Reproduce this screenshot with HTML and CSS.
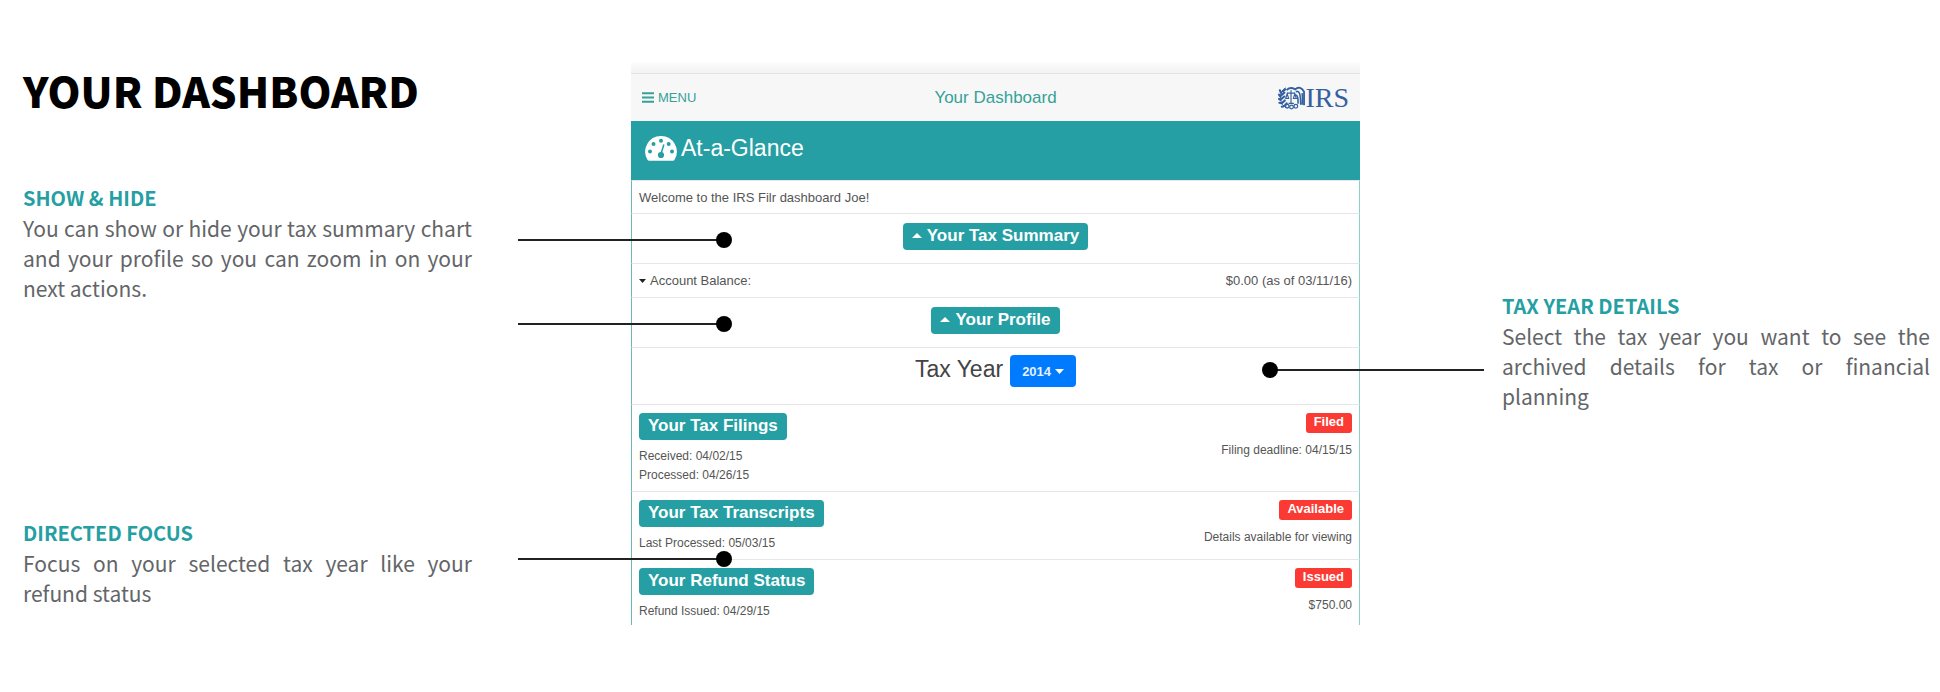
FILE: index.html
```html
<!DOCTYPE html>
<html lang="en">
<head>
<meta charset="utf-8">
<meta name="viewport" content="width=device-width, initial-scale=1">
<title>Your Dashboard</title>
<link rel="stylesheet" href="styles.css">
</head>
<body>
<main class="page">
  <div class="notes">
    <h1 class="title">YOUR DASHBOARD</h1>
    <section class="note">
      <h2>SHOW &amp; HIDE</h2>
      <p>You can show or hide your tax summary chart and your profile so you can zoom in on your next actions.</p>
    </section>
    <section class="note note-focus">
      <h2>DIRECTED FOCUS</h2>
      <p>Focus on your selected tax year like your refund status</p>
    </section>
  </div>

  <section class="app">
    <div class="shade"></div>
    <header class="navbar">
      <button class="menu" type="button">
        <svg width="12" height="11" viewBox="0 0 12 11" aria-hidden="true"><path d="M0 1.2h12M0 5.5h12M0 9.8h12" stroke="currentColor" stroke-width="2"/></svg>
        MENU
      </button>
      <span class="nav-title">Your Dashboard</span>
      <a class="logo" href="#">
        <svg width="27" height="24" viewBox="0 0 28 24" fill="none" stroke="currentColor" aria-hidden="true">
          <path d="M8 1.500C3 4 2 9 3 14.500S7 21 10 22" stroke-width="1"/>
          <path d="M3 6.500 2 4M2.500 10.500 1 8.500M2.500 14 1 13M3.500 17.500 1.500 17M6 20.500 4 21M5 5l2.500-2M3.500 9l3-2.500M3.500 13l3-2.500M4.500 17 7 14.500M7 20l2-2.500" stroke-width="2.200" stroke-linecap="round"/>
          <path d="M13.500 4v13M9.500 7h8M9.500 7.500l-1.500 5h3zM17.500 7.500l-1.500 5h3zM11 17.500h5.500" stroke-width="1.200"/>
          <path d="M9 4C11 .8 15 1.500 18 3c3-3 7-1.500 9 2.500v14" stroke-width="1.900"/>
          <path d="M18.500 5.500c4-2 5 4 5 13.500M18 9c2.500-.5 3 4 2.800 9M25 7c.5 3 .5 8 .2 12" stroke-width="1.600"/>
          <circle cx="9.500" cy="20.500" r="1.900" stroke-width="1.300"/><circle cx="14" cy="21.300" r="1.900" stroke-width="1.300"/><circle cx="18.500" cy="20.500" r="1.900" stroke-width="1.300"/>
        </svg>
        <span>IRS</span>
      </a>
    </header>
    <div class="glance">
      <svg width="32" height="25" viewBox="0 0 32 25" aria-hidden="true">
        <path fill="#fff" d="M16 0A15.700 15.700 0 0 0 2.600 24q.5.800 1.400.8h24q.9 0 1.400-.8A15.700 15.700 0 0 0 16 0z"/>
        <g fill="#259fa3"><circle cx="5" cy="15.500" r="2"/><circle cx="8.500" cy="8" r="2"/><circle cx="16" cy="4.800" r="2"/><circle cx="23.700" cy="8" r="2"/><circle cx="27" cy="15.500" r="2"/><circle cx="16" cy="19" r="3.100"/></g>
        <path d="M16 18 18.700 9" stroke="#259fa3" stroke-width="1.500" stroke-linecap="round"/>
      </svg>
      <h2>At-a-Glance</h2>
    </div>

    <div class="row line-row"><span>Welcome to the IRS Filr dashboard Joe!</span></div>

    <div class="row toggle-row">
      <button class="badge" type="button">
        <svg width="10" height="5" viewBox="0 0 10 5" aria-hidden="true"><path fill="currentColor" d="M0 5 5 0l5 5z"/></svg>
        Your Tax Summary
      </button>
      <span class="pointer pointer-left"></span>
    </div>

    <div class="row line-row">
      <span class="balance">
        <svg width="7" height="4" viewBox="0 0 7 4" aria-hidden="true"><path fill="#222" d="M0 0h7L3.500 4z"/></svg>
        Account Balance:
      </span>
      <span>$0.00 (as of 03/11/16)</span>
    </div>

    <div class="row toggle-row">
      <button class="badge" type="button">
        <svg width="10" height="5" viewBox="0 0 10 5" aria-hidden="true"><path fill="currentColor" d="M0 5 5 0l5 5z"/></svg>
        Your Profile
      </button>
      <span class="pointer pointer-left"></span>
    </div>

    <div class="row year-row">
      <label for="year">Tax Year</label>
      <span class="year">
        <select id="year"><option>2014</option></select>
        <svg width="9" height="5" viewBox="0 0 9 5" aria-hidden="true"><path fill="#fff" d="M0 0h9L4.500 5z"/></svg>
      </span>
      <span class="pointer pointer-right"></span>
    </div>

    <div class="row item">
      <div class="item-main">
        <button class="badge" type="button">Your Tax Filings</button>
        <p>Received: 04/02/15<br>Processed: 04/26/15</p>
      </div>
      <div class="item-side"><span class="status">Filed</span><p>Filing deadline: 04/15/15</p></div>
    </div>

    <div class="row item">
      <div class="item-main">
        <button class="badge" type="button">Your Tax Transcripts</button>
        <p>Last Processed: 05/03/15</p>
      </div>
      <div class="item-side"><span class="status">Available</span><p>Details available for viewing</p></div>
    </div>

    <div class="row item item-last">
      <div class="item-main">
        <button class="badge" type="button">Your Refund Status</button>
        <p>Refund Issued: 04/29/15</p>
      </div>
      <div class="item-side"><span class="status">Issued</span><p>$750.00</p></div>
      <span class="pointer pointer-left pointer-edge"></span>
    </div>
  </section>

  <div class="notes notes-right">
    <section class="note">
      <h2>TAX YEAR DETAILS</h2>
      <p><span class="full-lines">Select the tax year you want to see the archived details for tax or financial</span> planning</p>
    </section>
  </div>
</main>
</body>
</html>
```
FILE: styles.css
```css
* { box-sizing: border-box; }

body {
  margin: 0;
  background: #fff;
  color: #555;
  font-family: "Liberation Sans", Arial, sans-serif;
}

h1, h2, p { margin: 0; }

button, select {
  margin: 0;
  border: 0;
  font-family: inherit;
}

svg { flex: none; }

.page {
  display: grid;
  grid-template-columns: 608fr 729fr 570fr;
  padding: 62px 10px 40px 23px;
  align-items: start;
}

/* Annotations */
.notes {
  padding-right: 159px;
  font-family: "Noto Sans CJK SC", "Open Sans", sans-serif;
}

.title {
  color: #000;
  font-size: 42px;
  font-weight: 900;
  line-height: 56px;
}

.note { margin-top: 65px; }
.note-focus { margin-top: 215px; }

.note h2 {
  color: #259fa3;
  font-size: 20px;
  font-weight: 700;
  line-height: 30px;
}

.note p {
  color: #636568;
  font-size: 21px;
  line-height: 30px;
  text-align: justify;
}

.full-lines { display: block; text-align-last: justify; }

.notes-right { padding: 164px 0 0 142px; }

/* Dashboard */
.shade {
  height: 12px;
  background: linear-gradient(#fcfcfc, #f3f3f3);
  border-bottom: 1px solid #e2e2e2;
}

.navbar {
  display: grid;
  grid-template-columns: 1fr auto 1fr;
  align-items: center;
  height: 47px;
  padding: 0 11px;
  background: #f7f7f7;
  color: #35a198;
}

.menu {
  display: flex;
  align-items: center;
  justify-self: start;
  gap: 4px;
  padding: 0;
  background: none;
  color: inherit;
  font-size: 13px;
}

.nav-title { font-size: 17px; }

.logo {
  display: flex;
  align-items: center;
  justify-self: end;
  color: #34609f;
  font: 28px/30px "Liberation Serif", serif;
  text-decoration: none;
}

.glance {
  display: flex;
  align-items: center;
  gap: 4px;
  height: 59px;
  padding: 0 14px 5px;
  background: #259fa3;
  color: #fff;
}

.glance h2 { font-size: 23px; font-weight: 400; }

.row {
  position: relative;
  display: flex;
  padding: 0 7px;
  border: 1px solid #e6e6e6;
  border-width: 1px 1px 0;
  border-right-color: #8fd0c4;
  border-left-color: #6fb8aa;
}

.line-row {
  align-items: center;
  justify-content: space-between;
  height: 34px;
  font-size: 13px;
}

.glance + .line-row { height: 33px; }

.balance { display: flex; align-items: center; gap: 4px; }

.toggle-row { height: 50px; padding-top: 9px; align-items: flex-start; justify-content: center; }

.badge {
  display: flex;
  align-items: center;
  gap: 5px;
  padding: 3px 9px 5px;
  border-radius: 4px;
  background: #259fa3;
  color: #fff;
  font-size: 17px;
  font-weight: 700;
  line-height: 19px;
}

.year-row {
  align-items: flex-start;
  justify-content: center;
  gap: 7px;
  height: 57px;
  padding-top: 7px;
  color: #444;
  font-size: 23px;
  line-height: 28px;
}

.year { display: grid; align-items: center; }

.year select {
  grid-area: 1 / 1;
  appearance: none;
  width: 66px;
  height: 32px;
  padding: 0 0 0 12px;
  border-radius: 4px;
  background: #007bff;
  color: #e4f1ff;
  font-size: 13px;
  font-weight: 700;
}

.year svg {
  grid-area: 1 / 1;
  justify-self: end;
  margin-right: 12px;
  pointer-events: none;
}

.item {
  justify-content: space-between;
  padding-top: 8px;
  padding-bottom: 6px;
  font-size: 12px;
  line-height: 19px;
}

.item-last { padding-bottom: 4px; }

.item-main, .item-side { display: flex; flex-direction: column; align-items: flex-start; }
.item-main { gap: 7px; }
.item-side { align-items: flex-end; gap: 8px; }

.status {
  padding: 1px 8px 3px;
  border-radius: 3px;
  background: #fc3a34;
  color: #fff;
  font-size: 13px;
  font-weight: 700;
  line-height: 16px;
}

/* Callout lines that run from a row to its annotation */
.pointer {
  position: absolute;
  top: 25px;
  width: 207px;
  height: 2px;
  background: #222;
}

.pointer::after {
  content: "";
  position: absolute;
  top: -7px;
  width: 16px;
  height: 16px;
  border-radius: 50%;
  background: #000;
}

.pointer-left { left: -114px; }
.pointer-left::after { right: -7px; }
.pointer-right { top: 21px; right: -125px; width: 215px; }
.pointer-right::after { left: -7px; }
.pointer-edge { top: -2px; }
```
